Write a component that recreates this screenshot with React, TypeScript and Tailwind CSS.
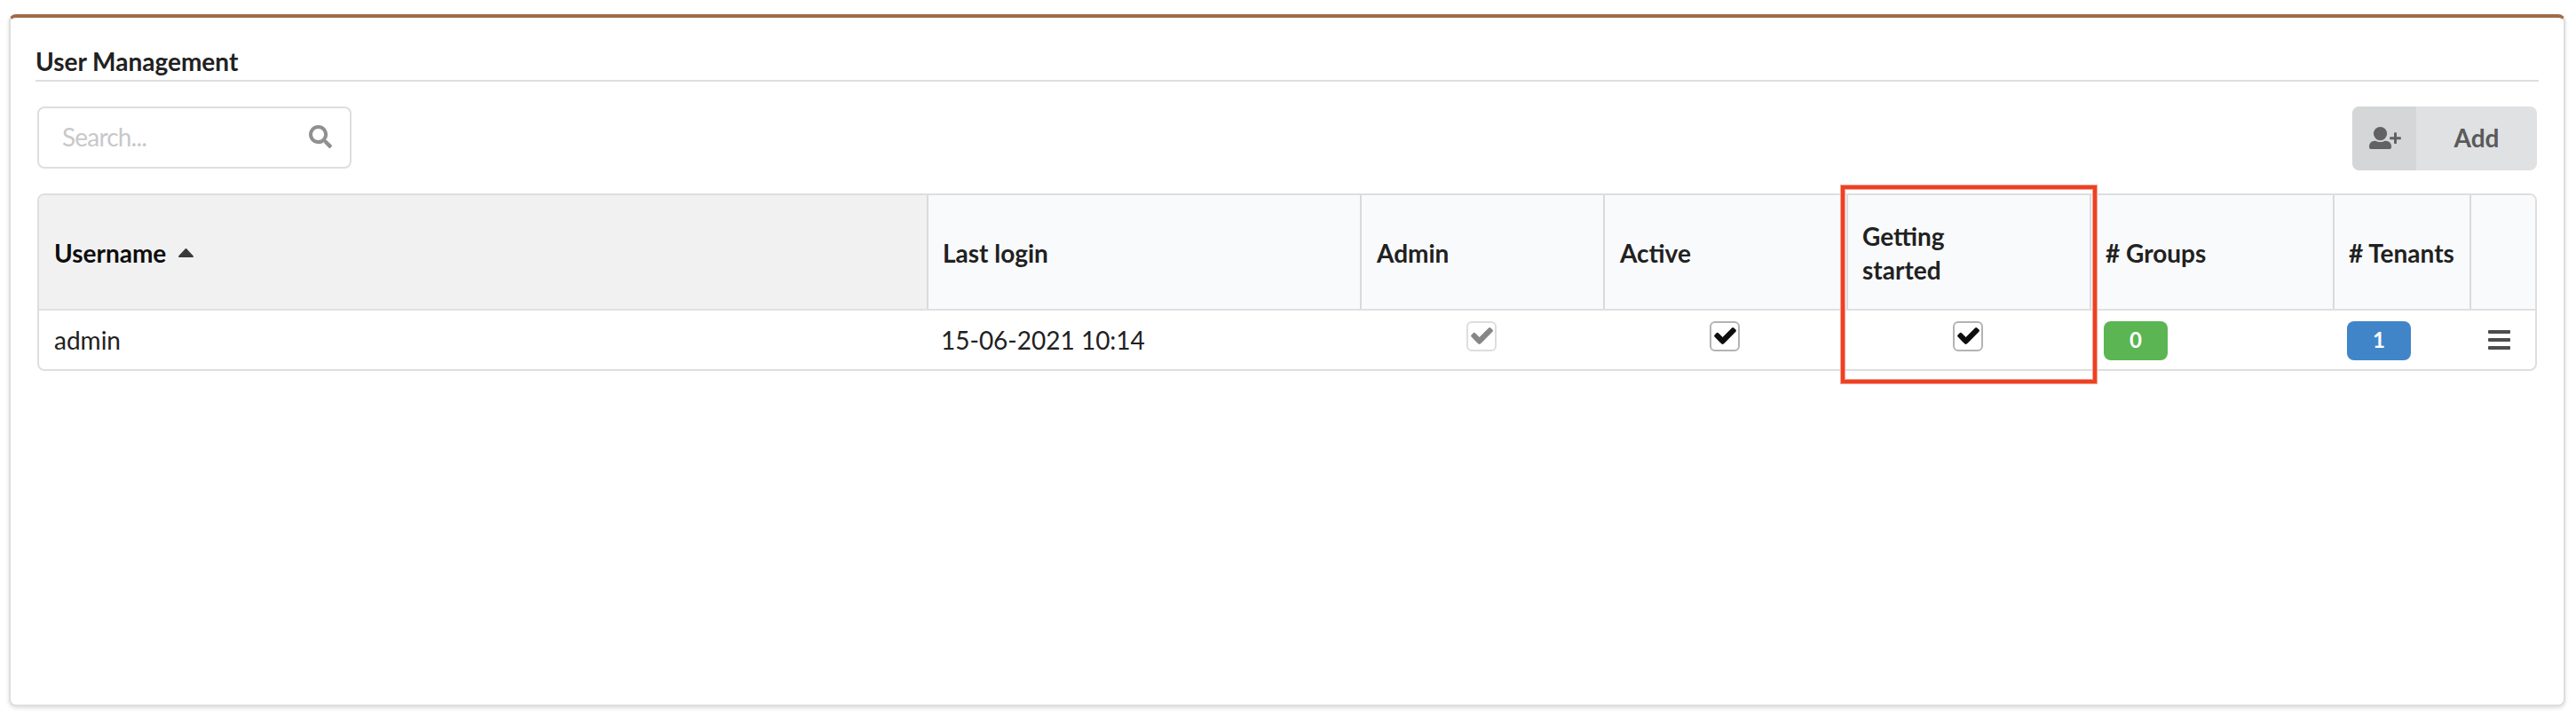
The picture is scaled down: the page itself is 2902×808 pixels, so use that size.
import React from "react";

const Check = ({ disabled = false }: { disabled?: boolean }) => (
  <div
    className={
      disabled
        ? "flex h-[34px] w-[34px] rounded-[6px] border-2 border-[#dddddd] bg-white"
        : "flex h-[34px] w-[34px] rounded-[6px] border-2 border-[#b3b3b3] bg-white"
    }
  >
    <svg
      viewBox="121 334 1550 1188"
      className={disabled ? "mt-[5px] ml-[3px] h-[19px] w-[25px] text-[#868686]" : "mt-[5px] ml-[3px] h-[19px] w-[25px] text-[#0d0d0d]"}
      fill="currentColor"
    >
      <path d="M1671 566q0 40-28 68l-724 724-136 136q-28 28-68 28t-68-28l-136-136-362-362q-28-28-28-68t28-68l136-136q28-28 68-28t68 28l294 295 656-657q28-28 68-28t68 28l136 136q28 28 28 68z" />
    </svg>
  </div>
);

const cols = "grid grid-cols-[1000px_488px_274px_274px_274px_274px_154px_74px]";
const th = "flex items-center border-l-2 border-[#d9dadb] bg-[#f9fafb] pl-4 pt-[2px]";

export default function App() {
  return (
    <div className="h-[808px] w-[2902px] bg-white px-[10px] pt-4 font-['Lato',sans-serif] text-[28px] leading-[38px] text-[#212121]">
      <main className="h-[780px] w-[2880px] rounded-[8px] border-2 border-t-4 border-[#dedede] border-t-[#a06b4a] bg-white px-7 shadow-[0_2px_4px_0_rgba(34,36,38,0.15)]">
        <h1 className="h-[72px] border-b-2 border-[#dedede] pt-[30px] text-[28px] leading-[38px] font-bold">User Management</h1>
        <div className="mt-7 flex h-[72px] justify-between px-[2px]">
          <div className="flex h-[70px] w-[354px] items-center justify-between rounded-[8px] border-2 border-[#dedede] pr-5 pb-[2px] pl-[26px]">
            <span className="tracking-[-0.8px] text-[#c8c8c8]">Search...</span>
            <svg viewBox="0 0 512 512" className="h-[26px] w-[26px]" fill="#909090">
              <path d="M505 442.7L405.3 343c-4.500-4.500-10.600-7-17-7H372c27.600-35.300 44-79.700 44-128C416 93.100 322.900 0 208 0S0 93.100 0 208s93.100 208 208 208c48.300 0 92.700-16.400 128-44v16.300c0 6.400 2.500 12.500 7 17l99.700 99.700c9.400 9.400 24.600 9.400 33.900 0l28.300-28.300c9.400-9.400 9.400-24.600.1-34zM208 336c-70.700 0-128-57.200-128-128 0-70.700 57.200-128 128-128 70.700 0 128 57.200 128 128 0 70.700-57.200 128-128 128z" />
            </svg>
          </div>
          <button className="flex h-[72px] w-[208px] overflow-hidden rounded-[8px] bg-[#e0e1e2] font-bold text-[#5a5a5b]">
            <span className="flex h-[72px] w-[72px] items-center justify-center bg-[#d5d6d7] pb-px pl-[2px]">
              <svg viewBox="0 0 36 25" className="h-[25px] w-9" fill="#626262">
                <circle cx="12.500" cy="7.600" r="7.600" />
                <path d="M6 15.700h1.200C8.800 16.600 10.600 17 12.500 17s3.700-.4 5.300-1.300H19a6 6 0 0 1 6 6V23a2 2 0 0 1-2 2H2a2 2 0 0 1-2-2v-1.300a6 6 0 0 1 6-6z" />
                <rect x="28" y="6.300" width="3" height="12.700" rx="0.800" />
                <rect x="23.100" y="11.200" width="12.800" height="3" rx="0.800" />
              </svg>
            </span>
            <span className="flex h-[72px] flex-1 items-center justify-center pb-[2px]">Add</span>
          </button>
        </div>
        <section className="relative mx-[2px] mt-[26px] h-[200px] rounded-[8px] border-2 border-[#dedede]">
          <div className={`${cols} h-[130px] overflow-hidden rounded-t-[6px] border-b-2 border-[#e0e0e1] font-bold`}>
            <div className="flex items-center bg-[#f1f1f1] pt-[2px] pl-[17px] text-[#0d0d0d]">
              Username
              <svg viewBox="0 0 17 10" className="ml-[14px] h-[10px] w-[17px]" fill="#3a3a3a">
                <path d="M7.600.4a1.300 1.300 0 0 1 1.800 0l7.200 7.800c.8.800.3 1.800-.7 1.800H1.100C.1 10-.4 9 .4 8.200z" />
              </svg>
            </div>
            <div className={th}>Last login</div>
            <div className={th}><span className="pl-px">Admin</span></div>
            <div className={th}><span className="pl-px">Active</span></div>
            <div className={th}>Getting<br />started</div>
            <div className={th}># Groups</div>
            <div className={th}># Tenants</div>
            <div className={th} />
          </div>
          <div className={`${cols} h-[66px] items-center`}>
            <div className="pl-[17px]">admin</div>
            <div className="pl-4">15-06-2021 10:14</div>
            <div className="flex h-[66px] justify-center pt-3"><Check disabled /></div>
            <div className="flex h-[66px] justify-center pt-3"><Check /></div>
            <div className="flex h-[66px] justify-center pt-3"><Check /></div>
            <div className="h-[66px] pt-3 pl-4">
              <div className="flex h-11 w-[72px] items-center justify-center rounded-[8px] bg-[#5ab552] pb-[2px] text-[24px] leading-6 font-bold text-white">0</div>
            </div>
            <div className="h-[66px] pt-3 pl-4">
              <div className="flex h-11 w-[72px] items-center justify-center rounded-[8px] bg-[#4185c9] pb-[2px] text-[24px] leading-6 font-bold text-white">1</div>
            </div>
            <div className="flex flex-col gap-[5px] pl-[21px]">
              <i className="block h-1 w-[25px] rounded-[1px] bg-[#4d4d4d]" />
              <i className="block h-1 w-[25px] rounded-[1px] bg-[#4d4d4d]" />
              <i className="block h-1 w-[25px] rounded-[1px] bg-[#4d4d4d]" />
            </div>
          </div>
          <div className="absolute top-[-11px] left-[2030px] h-[223px] w-[288px] border-4 border-[#ee4023] shadow-[0_0_0_1px_#f6a090,inset_0_0_0_1px_#f6a090]" />
        </section>
      </main>
    </div>
  );
}
